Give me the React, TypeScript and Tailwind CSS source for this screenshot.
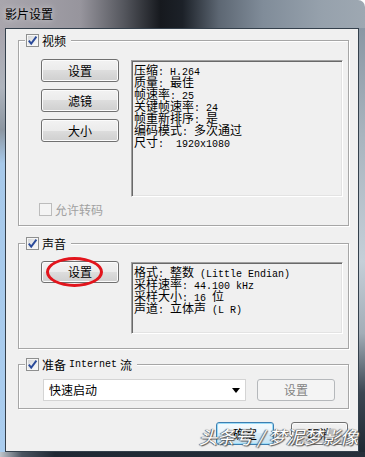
import type { ReactNode } from "react";

const CJK = /([\u3000-\u9fff\uff00-\uffef]+)/;

// SimSun-like mix: CJK glyphs 12px wide, latin half-width 6px
function Mixed({ text }: { text: string }) {
  return (
    <>
      {text.split(CJK).map((part, i) =>
        part === "" ? null : CJK.test(part) ? (
          <span key={i} className="text-[12px]">
            {part}
          </span>
        ) : (
          <span key={i} className="font-['Liberation_Mono',monospace] text-[10px]">
            {part}
          </span>
        )
      )}
    </>
  );
}

function Check({ checked = false, disabled = false }: { checked?: boolean; disabled?: boolean }) {
  return (
    <span
      className={
        disabled
          ? "flex h-[13px] w-[13px] shrink-0 items-center justify-center border border-[#bcbcbc] bg-[#f4f4f4]"
          : "flex h-[13px] w-[13px] shrink-0 items-center justify-center border border-[#8e8f8f] bg-[linear-gradient(135deg,#cfd1d4_0%,#eceded_55%,#fbfbfb_100%)] shadow-[inset_0_0_0_1px_#f6f6f6]"
      }
    >
      {checked ? (
        <svg width="11" height="11" viewBox="0 0 11 11">
          <path d="M1.8 5.6 L4.2 8.6 L9.4 1.6" fill="none" stroke="#2a4a9a" strokeWidth="1.9" />
        </svg>
      ) : null}
    </span>
  );
}

function Button({ children, className = "" }: { children: ReactNode; className?: string }) {
  return (
    <div
      className={
        "flex items-center justify-center rounded-[3px] border border-[#707070] bg-[linear-gradient(#f2f2f2_0%,#ebebeb_50%,#dddddd_50%,#cfcfcf_100%)] text-[12px] text-black shadow-[inset_0_0_0_1px_#fbfbfb] " +
        className
      }
    >
      {children}
    </div>
  );
}

function InfoBox({ lines, className = "" }: { lines: string[]; className?: string }) {
  return (
    <div
      className={
        "border border-[#a0a0a0] border-b-white border-r-white bg-[#f0f0f0] pl-[2px] pt-[1px] leading-[12px] whitespace-pre text-black shadow-[inset_1px_1px_0_#696969,inset_-1px_-1px_0_#e3e3e3] " +
        className
      }
    >
      {lines.map((l) => (
        <div key={l} className="h-[12px]">
          <Mixed text={l} />
        </div>
      ))}
    </div>
  );
}

function Group({ label, children, className = "" }: { label: ReactNode; children: ReactNode; className?: string }) {
  return (
    <div className={"relative border border-[#a6a6a6] shadow-[1px_1px_0_#fff,inset_1px_1px_0_#fff] " + className}>
      <div className="absolute -top-[7px] left-[6px] flex items-center gap-[3px] bg-[#f0f0f0] pl-[1px] pr-[5px] text-[12px] leading-[13px] text-black">
        <Check checked />
        {label}
      </div>
      {children}
    </div>
  );
}

export default function App() {
  return (
    <div className="relative flex h-[457px] w-[365px] flex-col overflow-hidden bg-white font-['Noto_Sans_CJK_SC',sans-serif]">
      <div className="h-[28px] shrink-0 rounded-tr-[7px] bg-[linear-gradient(90deg,#a9a6ad_0%,#97959d_22%,#54565d_34%,#16191e_44%,#1c2128_50%,#5d6773_60%,#808c99_72%,#96a1ac_88%,#9ea8b2_100%)] pl-[5px] pt-[7px] text-[12px] leading-[14px] text-black [text-shadow:0_0_6px_rgba(255,255,255,0.7)]">
        影片设置
      </div>
      <div className="flex flex-1">
        <div className="w-[5px] bg-[linear-gradient(180deg,#a8a4ac_0%,#aeb4bd_14%,#8c96a1_24%,#a7c9ea_32%,#aacdef_100%)]" />
        <div className="flex flex-1 flex-col border border-[#34404c] bg-[#f0f0f0] pb-[6px] pl-[12px] pr-[9px] pt-[11px]">
          <Group label="视频" className="h-[186px] pb-[9px] pl-[20px] pr-[5px] pt-[18px]">
            <div className="ml-[2px] flex items-start gap-[12px]">
              <div className="flex w-[78px] flex-col gap-[7px]">
                <Button className="h-[23px]">设置</Button>
                <Button className="h-[23px]">滤镜</Button>
                <Button className="h-[23px]">大小</Button>
              </div>
              <InfoBox
                className="mt-[1px] h-[137px] w-[212px]"
                lines={["压缩: H.264", "质量: 最佳", "帧速率: 25", "关键帧速率: 24", "帧重新排序: 是", "编码模式: 多次通过", "尺寸:  1920x1080"]}
              />
            </div>
            <div className="mt-[6px] flex items-center gap-[3px] text-[12px] leading-[13px] text-[#a0a0a0]">
              <Check disabled />
              允许转码
            </div>
          </Group>

          <Group label="声音" className="mt-[17px] h-[106px] pl-[22px] pr-[5px] pt-[17px]">
            <div className="flex items-start gap-[12px]">
              <div className="relative w-[78px]">
                <Button className="h-[22px]">设置</Button>
                <div className="absolute -top-[4px] left-[5px] h-[30px] w-[57px] rounded-[50%] border-[3px] border-[#e2141c]" />
              </div>
              <InfoBox
                className="mt-[1px] h-[72px] w-[212px]"
                lines={["格式: 整数 (Little Endian)", "采样速率: 44.100 kHz", "采样大小: 16 位", "声道: 立体声 (L R)"]}
              />
            </div>
          </Group>

          <Group label={<Mixed text="准备 Internet 流" />} className="mt-[15px] h-[45px] pl-[24px] pt-[14px]">
            <div className="flex items-center gap-[11px]">
              <div className="flex h-[22px] w-[203px] items-center justify-between border border-[#d4d4d4] bg-white pl-[5px] pr-[5px] text-[12px] text-black">
                快速启动
                <svg width="8" height="5" viewBox="0 0 8 5">
                  <path d="M0 0 H8 L4 5 Z" fill="#000" />
                </svg>
              </div>
              <div className="flex h-[22px] w-[78px] items-center justify-center rounded-[3px] border border-[#b5b8bb] bg-[#f4f4f4] text-[12px] text-[#838383]">
                设置
              </div>
            </div>
          </Group>

          <div className="mt-[13px] flex justify-end gap-[17px] pr-[1px]">
            <div className="flex h-[23px] w-[58px] items-center justify-center rounded-[3px] border border-[#3c7fb1] bg-[linear-gradient(#f4fafd_0%,#e9f5fc_50%,#d8eefa_50%,#c6e4f5_100%)] text-[12px] text-black shadow-[inset_0_0_0_1px_#9bdcf8]">
              确定
            </div>
            <Button className="h-[23px] w-[57px]">取消</Button>
          </div>
        </div>
        <div className="w-[6px] bg-[linear-gradient(180deg,#8a97a4_0%,#a9b4be_25%,#c5cfd8_55%,#a3adb7_72%,#3c4652_86%,#1f2933_100%)]" />
      </div>
      <div className="h-[5px] shrink-0 bg-[linear-gradient(90deg,#bfc6cc_0%,#4a5460_6%,#1f2833_15%,#26303b_100%)]" />

      <div className="absolute left-[199px] top-[424px] text-[18px] italic leading-[24px] text-white [text-shadow:0_0_1px_#444,1px_1px_1px_#555,-1px_0_1px_#666]">
        头条号 / 梦泥梦影像
      </div>
    </div>
  );
}
